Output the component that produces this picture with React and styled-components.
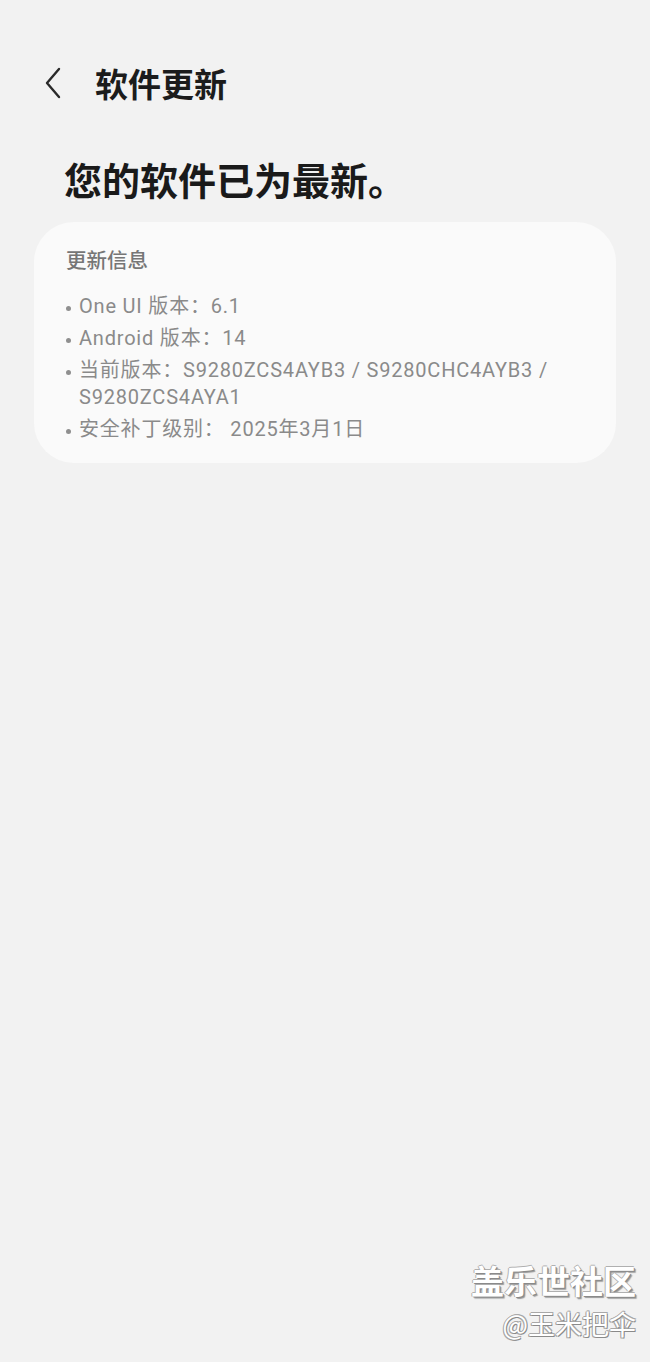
import React from "react";
import styled, { createGlobalStyle } from "styled-components";

const Global = createGlobalStyle`
  html, body { margin: 0; padding: 0; background: #f2f2f2; }
  body { font-family: Roboto, "Noto Sans CJK SC", sans-serif; }
`;

const Page = styled.div`
  position: relative;
  width: 650px;
  height: 1362px;
  background: #f2f2f2;
  overflow: hidden;
`;

const TopBar = styled.div`
  display: flex;
  align-items: center;
  height: 40px;
  padding: 63px 0 0 38px;
  gap: 27px;
`;

const BackButton = styled.div`
  width: 30px;
  height: 36px;
  display: flex;
  align-items: center;
  justify-content: center;
`;

const TopTitle = styled.h1`
  margin: 0;
  font-family: "Noto Sans CJK SC", sans-serif;
  font-size: 33px;
  font-weight: 700;
  color: #1c1c1c;
  line-height: 40px;
`;

const Heading = styled.h2`
  margin: 0;
  padding: 53px 0 0 64px;
  font-family: "Noto Sans CJK SC", sans-serif;
  font-size: 38px;
  font-weight: 700;
  color: #1a1a1a;
  line-height: 46px;
`;

const Card = styled.section`
  margin: 20px 34px 0 34px;
  background: #fafafa;
  border-radius: 40px;
  padding: 22px 32px 20px 32px;
`;

const CardTitle = styled.div`
  font-family: "Noto Sans CJK SC", sans-serif;
  font-size: 20.5px;
  font-weight: 500;
  color: #767676;
  line-height: 30px;
  margin-bottom: 19px;
`;

const List = styled.ul`
  list-style: none;
  margin: 0;
  padding: 0;
  display: flex;
  flex-direction: column;
  gap: 5px;
`;

const Item = styled.li`
  display: flex;
  font-family: Roboto, "Noto Sans CJK SC", sans-serif;
  font-size: 20px;
  letter-spacing: 0.8px;
  color: #8a8a8a;
  line-height: 27px;
`;

const Bullet = styled.span`
  flex: none;
  width: 13px;
  height: 27px;
  display: flex;
  align-items: center;
  &::before {
    content: "";
    width: 5px;
    height: 5px;
    margin-top: 3px;
    border-radius: 50%;
    background: #8f8f8f;
  }
`;

const ItemText = styled.span`
  flex: 1;
`;

const Watermark = styled.div`
  position: absolute;
  right: 14px;
  bottom: 20px;
  display: flex;
  flex-direction: column;
  align-items: flex-end;
  font-family: "Noto Sans CJK SC", sans-serif;
  color: #ffffff;
`;

const WatermarkMain = styled.div`
  font-size: 33px;
  font-weight: 700;
  line-height: 40px;
  text-shadow: 1px 1px 0 #8a8a8a, -1px 0 0 #b0b0b0, 0 -1px 0 #b0b0b0, 2px 2px 1px #9a9a9a;
`;

const WatermarkSub = styled.div`
  font-size: 27px;
  font-weight: 400;
  line-height: 36px;
  margin-top: 6px;
  text-shadow: 1px 1px 0 #8a8a8a, -1px 0 0 #a8a8a8, 0 -1px 0 #a8a8a8, 1px -1px 0 #a8a8a8, -1px 1px 0 #a8a8a8;
`;

const items = [
  "One UI 版本：6.1",
  "Android 版本：14",
  "当前版本：S9280ZCS4AYB3 / S9280CHC4AYB3 / S9280ZCS4AYA1",
  "安全补丁级别： 2025年3月1日",
];

export default function App() {
  return (
    <Page>
      <Global />
      <TopBar>
        <BackButton>
          <svg width="20" height="32" viewBox="0 0 20 32" fill="none">
            <path d="M16 2 L4 16 L16 30" stroke="#2a2a2a" strokeWidth="2.4" strokeLinecap="round" strokeLinejoin="round" />
          </svg>
        </BackButton>
        <TopTitle>软件更新</TopTitle>
      </TopBar>
      <Heading>您的软件已为最新。</Heading>
      <Card>
        <CardTitle>更新信息</CardTitle>
        <List>
          {items.map((t) => (
            <Item key={t}>
              <Bullet />
              <ItemText>{t}</ItemText>
            </Item>
          ))}
        </List>
      </Card>
      <Watermark>
        <WatermarkMain>盖乐世社区</WatermarkMain>
        <WatermarkSub>@玉米把伞</WatermarkSub>
      </Watermark>
    </Page>
  );
}
